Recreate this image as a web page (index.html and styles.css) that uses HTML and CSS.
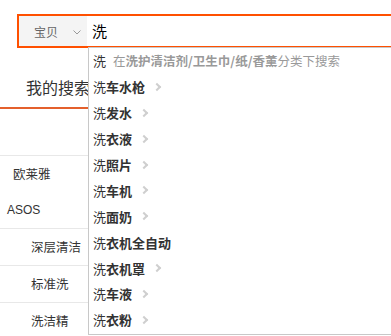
FILE: index.html
```html
<!DOCTYPE html>
<html lang="zh-CN">
<head>
<meta charset="utf-8">
<link rel="stylesheet" href="styles.css">
</head>
<body>
<div class="page">
  <div class="search-bar">
    <div class="scope">
      <span class="scope-label">宝贝</span>
      <svg class="scope-caret" width="8" height="5" viewBox="0 0 8 5"><polyline points="0.5,0.5 4,4 7.5,0.5" fill="none" stroke="#999" stroke-width="1"/></svg>
    </div>
    <div class="query">洗</div>
  </div>

  <div class="panel">
    <div class="tab">我的搜索</div>
    <div class="list">
      <div class="row sep pad13">欧莱雅</div>
      <div class="row pad7">ASOS</div>
      <div class="row sep pad31">深层清洁</div>
      <div class="row sep pad31">标准洗</div>
      <div class="row sep pad31">洗洁精</div>
    </div>
  </div>

  <ul class="suggest">
    <li class="item first"><span>洗</span><span class="hint">在<b>洗护清洁剂/卫生巾/纸/香薰</b>分类下搜索</span></li>
    <li class="item"><span>洗<b>车水枪</b></span><i class="arrow"></i></li>
    <li class="item"><span>洗<b>发水</b></span><i class="arrow"></i></li>
    <li class="item"><span>洗<b>衣液</b></span><i class="arrow"></i></li>
    <li class="item"><span>洗<b>照片</b></span><i class="arrow"></i></li>
    <li class="item"><span>洗<b>车机</b></span><i class="arrow"></i></li>
    <li class="item"><span>洗<b>面奶</b></span><i class="arrow"></i></li>
    <li class="item"><span>洗<b>衣机全自动</b></span></li>
    <li class="item"><span>洗<b>衣机罩</b></span><i class="arrow"></i></li>
    <li class="item"><span>洗<b>车液</b></span><i class="arrow"></i></li>
    <li class="item"><span>洗<b>衣粉</b></span><i class="arrow"></i></li>
  </ul>
</div>
</body>
</html>
```

FILE: styles.css
```css
* { box-sizing: border-box; }
html, body { margin: 0; padding: 0; background: #fff; }
body {
  font-family: "Noto Sans CJK SC", "Noto Sans", sans-serif;
  color: #333;
}
.page {
  position: relative;
  width: 391px;
  height: 336px;
  overflow: hidden;
}
.search-bar {
  display: flex;
  margin: 14px 0 0 17px;
  width: 420px;
  height: 34px;
  border: 2px solid #ff5000;
  border-right: none;
}
.scope {
  width: 68px;
  background: #f4f4f4;
  display: flex;
  align-items: center;
  padding-left: 15px;
  font-size: 12px;
  color: #666;
}
.scope-caret { margin-left: 15px; margin-top: 2px; }
.query {
  flex: 1;
  padding-left: 5px;
  font-size: 15px;
  line-height: 30px;
  color: #000;
}
.panel { width: 120px; }
.tab {
  margin-top: 19px;
  height: 42px;
  line-height: 40px;
  padding-left: 26px;
  font-size: 16px;
  color: #333;
  border-bottom: 2px solid #e4602c;
}
.list { margin-top: 46px; }
.row {
  height: 36px;
  line-height: 36px;
  font-size: 12.5px;
  color: #333;
}
.row.sep { height: 37px; border-top: 1px solid #e8e8e8; }
.pad13 { padding-left: 13px; }
.pad7 { padding-left: 7px; font-family: "Liberation Sans", Arial, sans-serif; font-size: 12px; }
.pad31 { padding-left: 31px; }
.suggest {
  position: absolute;
  left: 88px;
  top: 47px;
  width: 330px;
  height: 288px;
  margin: 0;
  padding: 0;
  list-style: none;
  background: #fff;
  border: 1px solid #c8c8c8;
}
.item {
  display: flex;
  align-items: center;
  height: 25.9px;
  padding-left: 4px;
  font-size: 13px;
  color: #333;
}
.item b { font-weight: bold; }
.hint { margin-left: 7px; color: #999; font-size: 12.5px; }
.hint b { color: #999; }
.arrow {
  display: inline-block;
  width: 6px;
  height: 6px;
  margin-left: 9px;
  border-right: 2px solid #cfcfcf;
  border-top: 2px solid #cfcfcf;
  transform: rotate(45deg);
}
```
